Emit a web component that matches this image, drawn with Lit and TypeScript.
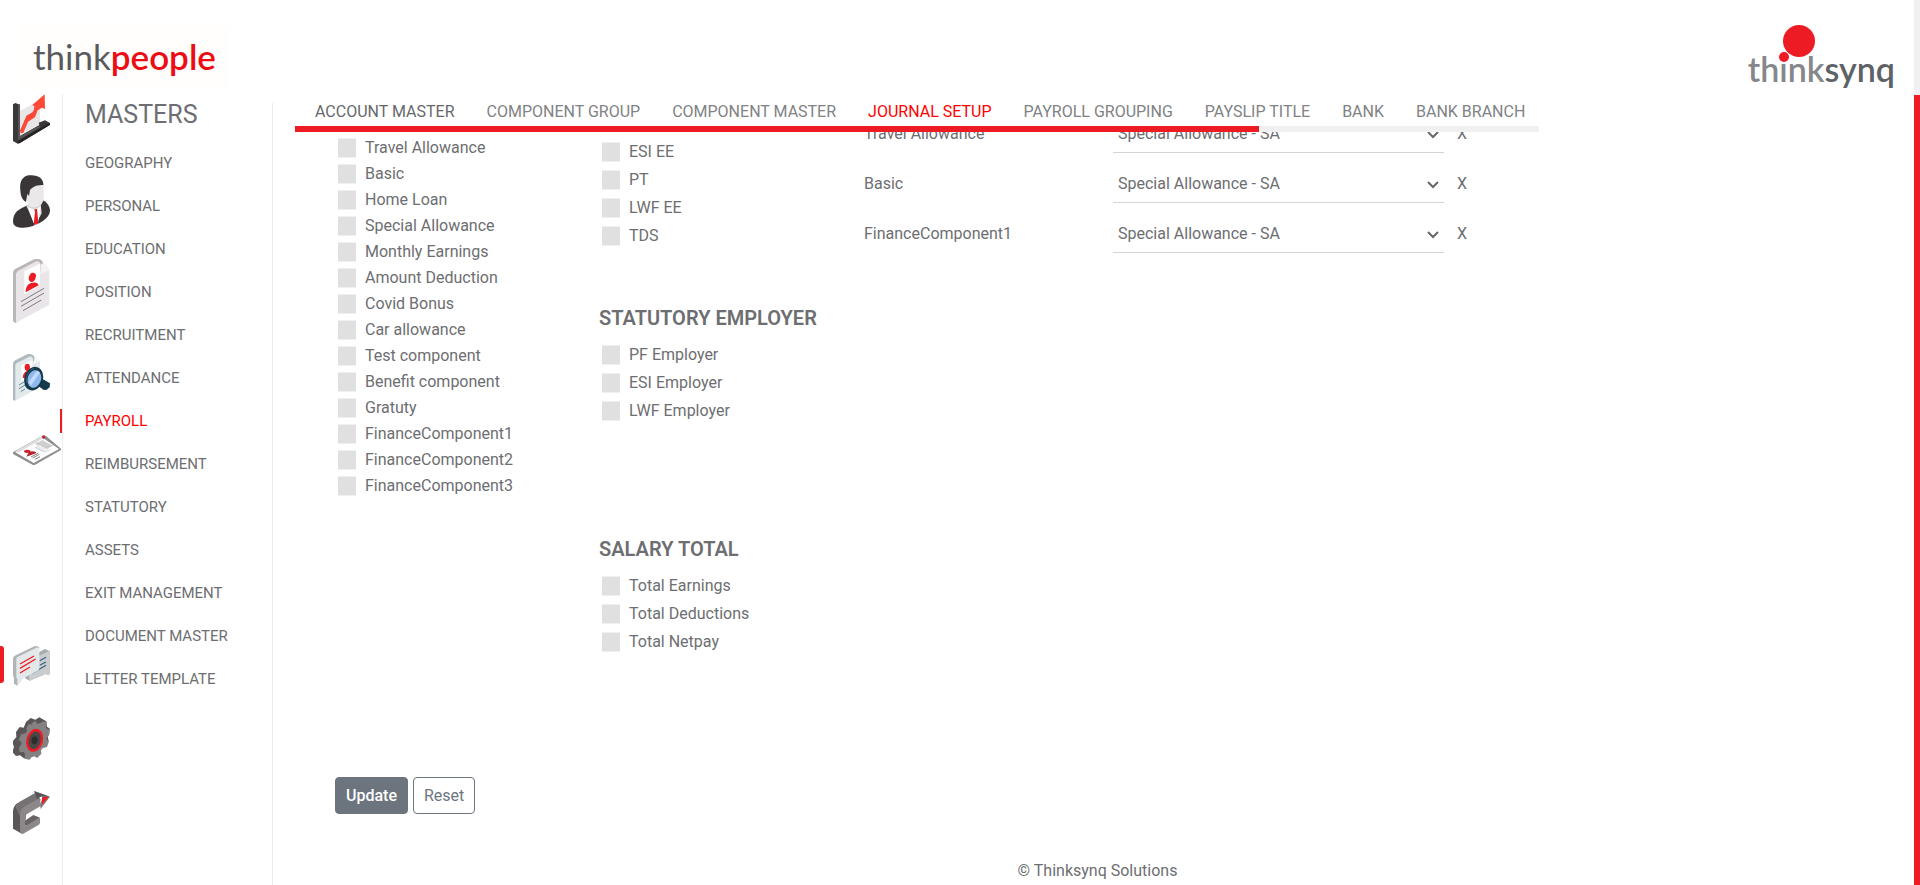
import { LitElement, html, css, svg, nothing } from "lit";
import { customElement, state } from "lit/decorators.js";
import { classMap } from "lit/directives/class-map.js";

interface RailItem {
  label: string;
  box: string;
  width: number;
  height: number;
  art: unknown;
  active?: boolean;
}

const TOP_RAIL: RailItem[] = [
  {
    label: "Dashboard", box: "39 282 111 150", width: 37, height: 50,
    art: svg`
      <path fill="#e9e6e8" d="M60 333l60-33v72l-60 35z"/>
      <path fill="#3b3839" d="M39 313l7-4 14 5v94l58-33-2-7 19-7 15 8v6l-91 55-6 1-14-8z"/>
      <path fill="#575455" d="M54 315l6-2v95l56-31 6 4-68 41z"/>
      <path fill="#252324" d="M54 422l96-54v6l-91 55-5 1z"/>
      <path fill="#b82e25" d="M104 318l8 6-6 18-20 12-18 44-8-5 20-46 21-12z"/>
      <path fill="#ff4a38" d="M134 283l1 44-9-4-13 8-8 21-21 13-14 33-8 2-1-7 18-44 19-12 8-17-9-5z"/>`,
  },
  {
    label: "Employee", box: "39 525 111 159", width: 37, height: 53,
    art: svg`
      <path fill="#3a3637" d="M39 665c0-22 9-33 34-45l52-21c15 6 25 18 25 34-1 22-34 42-66 49-21 4-45 0-45-17z"/>
      <path fill="#e4e1e3" d="M79 618l6 12 20 48 20-38-4-38z"/>
      <path fill="#fff" d="M84 622l24 9 14-12-8 50-10 7z"/>
      <path fill="#ed1c24" d="M103 628l8-1 1 10 3 32-12 6-2-1 4-38z"/>
      <path fill="#ebe8ea" d="M73 570l10-24 34-5 14 10v50l-8 14c-10 8-30 8-40-1l-2-18-9-14z"/>
      <path fill="#3a3637" d="M61 571c-3-27 6-41 25-45 29-3 45 10 44 29-15 0-29 2-40 15l-3 18-5-7-4 25c-12-7-16-18-17-35z"/>
      <path fill="none" stroke="#c9c5c7" stroke-width="2" d="M78 612c12 16 35 17 45 1"/>`,
  },
  {
    label: "Profile", box: "39 57 111 192", width: 37, height: 64,
    art: svg`
      <path fill="#bab6b8" d="M39 99c0-6 3-10 8-13l52-27c16-6 30 0 32 15l-78 171-7 4-7-5z"/>
      <path fill="#e9e5e8" d="M48 104c0-6 3-9 7-12l51-27c9-4 15 1 16 9v26l26-10v104l-100 54z"/>
      <path fill="#f5f2f4" d="M130 67l20 22-28 13v-26z"/>
      <path fill="#fff" d="M73 94l47-23v65l-47 27z"/>
      <ellipse cx="97" cy="112" rx="10" ry="14" fill="#ed1c24" transform="rotate(22 97 112)"/>
      <path fill="#ed1c24" d="M77 157c0-20 9-28 21-29 12-2 17 3 18 8z"/>
      <path fill="none" stroke="#676365" stroke-width="2.5" d="M63 185l69-40M63 199l69-40M69 212l55-32"/>`,
  },
  {
    label: "Search", box: "39 342 111 141", width: 37, height: 47,
    art: svg`
      <path fill="#aebabd" d="M39 373c0-6 2-9 7-12l36-18c12-3 21 2 23 13l-58 124-4 2-4-2z"/>
      <path fill="#e1e9eb" d="M46 378c0-5 1-8 6-10l36-18c6-2 10 1 11 7v13l21-8v79l-74 41z"/>
      <path fill="#f4f8f9" d="M105 350l15 12-21 11z"/>
      <path fill="#fff" d="M64 376l33-16v46l-33 20z"/>
      <ellipse cx="82" cy="382" rx="8" ry="11" fill="#ed1c24"/>
      <path fill="#ed1c24" d="M68 414c1-16 8-22 20-22l-8 22z"/>
      <path fill="none" stroke="#477c8a" stroke-width="2.5" d="M57 435l17-10M57 446l18-11M62 455l13-8"/>
      <path fill="#153a4c" d="M121 413l29 17-1 12-10 8-9-1-22-16z"/>
      <ellipse cx="101" cy="416" rx="28" ry="36" fill="#153a4c" transform="rotate(18 101 416)"/>
      <ellipse cx="103" cy="417" rx="20" ry="27" fill="#8fb9ec" transform="rotate(18 103 417)"/>
      <path fill="#c0dafb" d="M86 426l25-34 9 5-27 40z"/>
      <path fill="none" stroke="#316079" stroke-width="3" d="M80 428c-4-17 5-37 22-43"/>`,
  },
  {
    label: "Identity card", box: "39 576 144 99", width: 48, height: 33,
    art: svg`
      <path fill="#8e8e8e" d="M39 637l89-50 10 1 45 38v4l-79 45h-5l-60-33z"/>
      <path fill="#fff" d="M46 637l80-45 51 35-76 42z"/>
      <path fill="#dedede" d="M46 634l80-45 6 4-77 45z"/>
      <path fill="#cfcfcf" d="M105 612l22-12 31 17-20 12z"/>
      <path fill="#ececec" d="M104 623l15-9 24 14-14 8z"/>
      <path fill="none" stroke="#c1c1c1" stroke-width="2" d="M108 607l27 15 27-7M105 621l28 15 17-7"/>
      <circle cx="131" cy="591" r="5" fill="#b92731"/>
      <ellipse cx="82" cy="634" rx="10" ry="5" fill="#d31f2b"/>
      <path fill="#b9202b" d="M79 650l8-14c12-5 23-1 21 4z"/>
      <path fill="none" stroke="#686868" stroke-width="2.5" d="M93 651l21-11M98 654l20-11M105 658l15-8"/>`,
  },
];

const BOTTOM_RAIL: RailItem[] = [
  {
    label: "Masters", box: "39 72 111 120", width: 37, height: 40, active: true,
    art: svg`
      <path fill="#a9acae" d="M108 95l27-14 15 7v62l-3 10-10-4-48 20-14-7z"/>
      <path fill="#c9cdcf" d="M84 117l66-31v64l-3 10-9-5-50 21z"/>
      <path fill="none" stroke="#3c5f7a" stroke-width="3.5" d="M119 116l19-10M119 130l19-10M97 154l41-24"/>
      <path fill="#b2b5b7" d="M39 111c0-5 1-7 5-10l59-28c6-2 14 1 15 6L52 191l-10-6v-18l-3-5z"/>
      <path fill="#e3e8ea" d="M49 113c0-4 1-7 5-9l55-27c5-2 9 0 9 5v55c0 5-2 8-6 10l-42 22-18 22v-20l-3-5z"/>
      <path fill="none" stroke="#ed1c24" stroke-width="4" d="M60 126l42-24M60 139l47-28M60 153l30-18"/>`,
  },
  {
    label: "Settings", box: "39 288 111 129", width: 37, height: 43,
    art: svg`
      <path fill="#5a5657" d="M78 303l14-12 14 5 12-7 21 12 2 16 9 6-7 22 3 16-12 18-12 3-9 17-16 2-11 14-14-3-12-9-12 2-12-13 6-13-5-17 12-14-1-15 11-15 12 2z"/>
      <path fill="#858183" d="M93 309l13-10 6 10 9-3 10-5 9 3-2 14 3 6 9 1-2 16-9 12 3 5 5 3-6 17-12 2-6 8 1 10-12 13-9-5-8 3-7 7-14-3 1-14-4-6-12 1-2-14 8-12-3-7-6-3 7-18 14-3 4-6-2-10 8-13 10 5z"/>
      <ellipse cx="104" cy="358" rx="25" ry="35" fill="#ed1c24" transform="rotate(14 104 358)"/>
      <ellipse cx="104" cy="358" rx="18" ry="27" fill="#4a4748" transform="rotate(14 104 358)"/>
      <ellipse cx="104" cy="358" rx="9" ry="12" fill="#2f2c2d" transform="rotate(14 104 358)"/>`,
  },
  {
    label: "Log out", box: "39 513 111 129", width: 37, height: 43,
    art: svg`
      <path fill="#5b5758" d="M39 574c0-10 5-19 13-25l27 20-6 70-7 2-27-15z"/>
      <path fill="#767274" d="M46 560c2-6 7-11 13-15l45-25 18 18-4 15-43 26-14 12z"/>
      <path fill="#8c888a" d="M60 585c0-12 6-21 15-26l43-24 6 22-38 22c-8 4-11 9-11 17v17c0 4 2 5 5 3l40-23v14c0 4-2 7-6 9l-39 22c-8 5-15 1-15-8z"/>
      <path fill="#676364" d="M75 602l25-17 20 8-41 24-4-2z"/>
      <path fill="#858183" d="M102 513l48 17-28 37-2-13 8-22z"/>
      <path fill="#595556" d="M102 513l48 17-25-1-14 8z"/>
      <path fill="#ed1c24" d="M126 532l20-2-20 24z"/>`,
  },
];

const MASTERS = [
  "GEOGRAPHY", "PERSONAL", "EDUCATION", "POSITION", "RECRUITMENT", "ATTENDANCE", "PAYROLL",
  "REIMBURSEMENT", "STATUTORY", "ASSETS", "EXIT MANAGEMENT", "DOCUMENT MASTER", "LETTER TEMPLATE",
];

const TABS = [
  "ACCOUNT MASTER", "COMPONENT GROUP", "COMPONENT MASTER", "JOURNAL SETUP",
  "PAYROLL GROUPING", "PAYSLIP TITLE", "BANK", "BANK BRANCH",
];

const COMPONENTS = [
  "Travel Allowance", "Basic", "Home Loan", "Special Allowance", "Monthly Earnings",
  "Amount Deduction", "Covid Bonus", "Car allowance", "Test component", "Benefit component",
  "Gratuty", "FinanceComponent1", "FinanceComponent2", "FinanceComponent3",
];

const GROUPS = [
  { title: "", items: ["ESI EE", "PT", "LWF EE", "TDS"] },
  { title: "STATUTORY EMPLOYER", items: ["PF Employer", "ESI Employer", "LWF Employer"] },
  { title: "SALARY TOTAL", items: ["Total Earnings", "Total Deductions", "Total Netpay"] },
];

@customElement("icon-rail")
class IconRail extends LitElement {
  static styles = css`
    :host {
      display: flex;
      flex: none;
      box-sizing: border-box;
      width: 63px;
      border-right: 1px solid #ececec;
    }
    .rail {
      flex: 1;
      display: flex;
      flex-direction: column;
      justify-content: space-between;
      padding-bottom: 51px;
    }
    .group {
      display: flex;
      flex-direction: column;
      gap: 31px;
    }
    .link {
      display: block;
      position: relative;
      padding-left: 13px;
    }
    .link.active::before {
      content: "";
      position: absolute;
      left: 0;
      top: 0;
      width: 4px;
      height: 37px;
      border-radius: 0 3px 3px 0;
      background: #ed1c24;
    }
    svg {
      display: block;
    }
  `;

  private item(i: RailItem) {
    return html`<a class=${classMap({ link: true, active: !!i.active })} href="#" aria-label=${i.label}>
      <svg viewBox=${i.box} width=${i.width} height=${i.height} aria-hidden="true">${i.art}</svg>
    </a>`;
  }

  render() {
    return html`<nav class="rail" aria-label="Main">
      <div class="group">${TOP_RAIL.map((i) => this.item(i))}</div>
      <div class="group">${BOTTOM_RAIL.map((i) => this.item(i))}</div>
    </nav>`;
  }
}

@customElement("masters-menu")
class MastersMenu extends LitElement {
  static styles = css`
    :host {
      display: block;
      flex: none;
      box-sizing: border-box;
      width: 210px;
      margin-top: 9px;
      border-right: 1px solid #ececec;
    }
    .title {
      margin: 0 0 15px;
      padding-left: 22px;
      font-size: 25px;
      line-height: 24px;
      font-weight: 400;
    }
    .list {
      margin: 0;
      padding: 0;
      list-style: none;
    }
    .link {
      display: block;
      position: relative;
      padding-left: 22px;
      font-size: 15px;
      line-height: 43px;
      color: inherit;
      text-decoration: none;
    }
    .link.active {
      color: #ff0000;
    }
    .link.active::before {
      content: "";
      position: absolute;
      left: -3px;
      top: 9px;
      width: 2px;
      height: 24px;
      background: #ed1c24;
    }
  `;

  render() {
    return html`<h1 class="title">MASTERS</h1>
      <ul class="list">
        ${MASTERS.map((m) => html`<li>
          <a class=${classMap({ link: true, active: m === "PAYROLL" })} href="#">${m}</a>
        </li>`)}
      </ul>`;
  }
}

@customElement("app-root")
class AppRoot extends LitElement {
  @state() private rows = ["Travel Allowance", "Basic", "FinanceComponent1"];

  static styles = css`
    :host {
      display: flex;
      min-height: 100vh;
      background: #fff;
      color: #6d6e71;
      font-family: Roboto, "Liberation Sans", sans-serif;
      font-size: 16px;
      line-height: 24px;
    }
    .page {
      flex: 1;
      min-width: 0;
      display: flex;
      flex-direction: column;
    }
    .edge {
      flex: none;
      width: 6px;
      background: linear-gradient(#f0f0f0 95px, #ed1c24 95px);
    }
    .header {
      display: flex;
      justify-content: space-between;
      box-sizing: border-box;
      height: 94px;
      padding: 25px 19px 0 20px;
    }
    .people {
      box-sizing: border-box;
      width: 209px;
      height: 65px;
      padding-left: 13px;
      background: #fffefc;
      color: #595a5c;
      font-family: Lato, sans-serif;
      font-size: 35px;
      line-height: 62px;
      text-decoration: none;
    }
    .people-red {
      color: #ed0c14;
      font-weight: 600;
    }
    .synq {
      position: relative;
      padding-top: 19px;
      color: #85878a;
      font-family: Lato, sans-serif;
      font-size: 34px;
      font-weight: 600;
      line-height: 50px;
      text-decoration: none;
    }
    .synq-dark {
      color: #5d6266;
    }
    .dots {
      position: absolute;
      left: 31px;
      top: 0;
    }
    .body {
      flex: 1;
      display: flex;
    }
    .main {
      flex: 1;
      min-width: 0;
      display: flex;
      flex-direction: column;
    }
    .tabs {
      align-self: flex-start;
      position: relative;
      margin-left: 22px;
      background: #fff;
    }
    .tab-list {
      display: flex;
      gap: 32px;
      padding: 6px 14px 2px 20px;
    }
    .tab {
      color: #808285;
      text-decoration: none;
      white-space: nowrap;
    }
    .tab.hover {
      color: #67686b;
    }
    .tab.active {
      color: #ff0000;
    }
    .track {
      height: 6px;
      background: #f0f0f0;
    }
    .fill {
      height: 100%;
      background: #ed1c24;
    }
    .panel {
      overflow: hidden;
      padding-left: 62px;
    }
    .columns {
      display: grid;
      grid-template-columns: 264px 265px minmax(0, 616px);
      margin-top: -29px;
    }
    .components {
      padding-top: 32px;
    }
    .groups {
      padding-top: 35px;
    }
    .check {
      display: flex;
      align-items: center;
      gap: 9px;
      padding-left: 3px;
      height: 28px;
    }
    .components .check {
      height: 26px;
    }
    .box {
      appearance: none;
      box-sizing: border-box;
      width: 18px;
      height: 20px;
      margin: 0;
      border: solid #f0f0f0;
      border-width: 1px 0;
      background: #e0e0e0;
    }
    .box:checked {
      background: #ed1c24;
    }
    .group {
      min-height: 231px;
    }
    .group.first {
      min-height: 168px;
    }
    .group-title {
      margin: 0 0 11px;
      font-size: 20px;
      line-height: 24px;
      font-weight: 600;
    }
    .mapping {
      display: grid;
      grid-template-columns: 249px minmax(0, 331px) auto;
      align-items: end;
      min-height: 50px;
      line-height: 38px;
    }
    .picker {
      position: relative;
    }
    .select {
      appearance: none;
      display: block;
      box-sizing: border-box;
      width: 100%;
      height: 38px;
      padding: 0 28px 0 5px;
      border: 0;
      border-bottom: 1px solid #d3d4d6;
      border-radius: 0;
      background: transparent;
      color: inherit;
      font: inherit;
    }
    .chevron {
      position: absolute;
      right: 5px;
      top: 16px;
      pointer-events: none;
    }
    .remove {
      justify-self: start;
      padding: 0 13px;
      border: 0;
      background: none;
      color: inherit;
      font: inherit;
      cursor: pointer;
    }
    .actions {
      display: flex;
      gap: 5px;
      padding-top: 9px;
    }
    .btn {
      box-sizing: border-box;
      height: 37px;
      padding: 0 10px;
      border: 1px solid #6c757d;
      border-radius: 4px;
      background: #fff;
      color: #6c757d;
      font: inherit;
      cursor: pointer;
    }
    .btn.primary {
      background: #6c757d;
      color: #fff;
      font-weight: 500;
    }
    .footer {
      margin-top: auto;
      padding: 16px 0 2px 8px;
      text-align: center;
    }
  `;

  private check(label: string) {
    return html`<label class="check"><input class="box" type="checkbox" />${label}</label>`;
  }

  private remove(name: string) {
    this.rows = this.rows.filter((r) => r !== name);
  }

  render() {
    return html`
      <div class="page">
        <header class="header">
          <a class="people" href="#">think<span class="people-red">people</span></a>
          <a class="synq" href="#">think<span class="synq-dark">synq</span>
            <svg class="dots" width="36" height="38" viewBox="0 0 36 38" aria-hidden="true">
              <circle cx="20" cy="16" r="16" fill="#ed1c24" />
              <circle cx="5" cy="32" r="5" fill="#ed1c24" />
            </svg>
          </a>
        </header>
        <div class="body">
          <icon-rail></icon-rail>
          <masters-menu></masters-menu>
          <main class="main">
            <div class="tabs">
              <nav class="tab-list" aria-label="Payroll">
                ${TABS.map((t, i) => html`<a
                  class=${classMap({ tab: true, hover: i === 0, active: t === "JOURNAL SETUP" })}
                  href="#">${t}</a>`)}
              </nav>
              <div class="track"><div class="fill" style="width:77.5%"></div></div>
            </div>
            <div class="panel">
              <div class="columns">
                <div class="components">${COMPONENTS.map((c) => this.check(c))}</div>
                <div class="groups">
                  ${GROUPS.map((g) => html`<section class=${classMap({ group: true, first: !g.title })}>
                    ${g.title ? html`<h2 class="group-title">${g.title}</h2>` : nothing}
                    ${g.items.map((c) => this.check(c))}
                  </section>`)}
                </div>
                <div>
                  ${this.rows.map((r, i) => html`<div class="mapping">
                    <label for=${"map-" + i}>${r}</label>
                    <div class="picker">
                      <select class="select" id=${"map-" + i}><option>Special Allowance - SA</option></select>
                      <svg class="chevron" width="12" height="8" viewBox="0 0 12 8" aria-hidden="true">
                        <path d="M1 1l5 5 5-5" fill="none" stroke="#65676a" stroke-width="2" />
                      </svg>
                    </div>
                    <button class="remove" type="button" @click=${() => this.remove(r)}>X</button>
                  </div>`)}
                </div>
              </div>
              <div class="actions">
                <button class="btn primary" type="button">Update</button>
                <button class="btn" type="button">Reset</button>
              </div>
            </div>
            <footer class="footer">© Thinksynq Solutions</footer>
          </main>
        </div>
      </div>
      <div class="edge"></div>
    `;
  }
}
